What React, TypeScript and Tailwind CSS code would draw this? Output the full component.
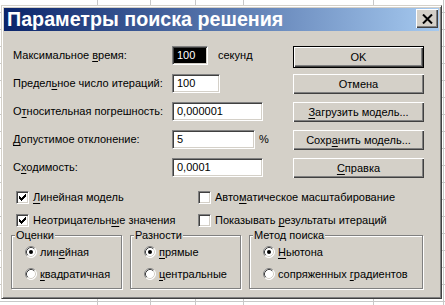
import React from "react";

function Acc({ t }: { t: string }) {
  const i = t.indexOf("&");
  if (i < 0) return <>{t}</>;
  return (
    <>
      {t.slice(0, i)}
      <span className="underline underline-offset-[2px]">{t[i + 1]}</span>
      {t.slice(i + 2)}
    </>
  );
}

const sunken =
  "border border-t-[#808080] border-l-[#808080] border-r-white border-b-white shadow-[inset_1px_1px_0_#404040,inset_-1px_-1px_0_#d4d0c8]";

function Field({ w, value, selected }: { w: string; value: string; selected?: boolean }) {
  return (
    <div
      className={`h-[19px] ${w} ${sunken} flex items-center pl-[4px] ${
        selected ? "bg-black text-white" : "bg-white text-black"
      }`}
    >
      {value}
    </div>
  );
}

function Btn({ t, def }: { t: string; def?: boolean }) {
  return (
    <button
      type="button"
      className={
        def
          ? "h-[22px] w-full border border-black bg-[#d4d0c8] shadow-[inset_1px_1px_0_#fff,inset_-1px_-1px_0_#404040,inset_-2px_-2px_0_#808080] flex items-center justify-center"
          : "h-[20px] w-full bg-[#d4d0c8] shadow-[inset_1px_1px_0_#fff,inset_-1px_-1px_0_#404040,inset_-2px_-2px_0_#808080] flex items-center justify-center"
      }
    >
      <Acc t={t} />
    </button>
  );
}

const CHECK = ["......X", ".....XX", "X...XXX", "XX.XXX.", "XXXXX..", ".XXX...", "..X...."];

function Check({ checked, t }: { checked?: boolean; t: string }) {
  return (
    <div className="flex items-center gap-[4px] h-[13px]">
      <div className={`w-[13px] h-[13px] shrink-0 bg-white ${sunken} flex items-center justify-center`}>
        {checked && (
          <svg width="7" height="7" viewBox="0 0 7 7" shapeRendering="crispEdges">
            {CHECK.flatMap((row, y) =>
              row.split("").map((c, x) =>
                c === "X" ? <rect key={`${x}-${y}`} x={x} y={y} width="1" height="1" fill="#000" /> : null
              )
            )}
          </svg>
        )}
      </div>
      <span className="whitespace-nowrap">
        <Acc t={t} />
      </span>
    </div>
  );
}

function Radio({ on, t }: { on?: boolean; t: string }) {
  return (
    <div className="flex items-center gap-[3px] h-[12px]">
      <svg width="12" height="12" viewBox="0 0 12 12" className="shrink-0">
        <circle cx="6" cy="6" r="5.5" fill="#fff" />
        <path d="M2.11 9.89 A5.5 5.5 0 0 1 9.89 2.11" stroke="#808080" fill="none" strokeWidth="1" />
        <path d="M9.89 2.11 A5.5 5.5 0 0 1 2.11 9.89" stroke="#ffffff" fill="none" strokeWidth="1" />
        <path d="M2.82 9.18 A4.5 4.5 0 0 1 9.18 2.82" stroke="#404040" fill="none" strokeWidth="1" />
        <path d="M9.18 2.82 A4.5 4.5 0 0 1 2.82 9.18" stroke="#d4d0c8" fill="none" strokeWidth="1" />
        {on && <circle cx="6" cy="6" r="2" fill="#000" />}
      </svg>
      <span className="whitespace-nowrap">
        <Acc t={t} />
      </span>
    </div>
  );
}

function Group({ title, w, children }: { title: string; w: string; children: React.ReactNode }) {
  return (
    <div
      className={`relative ${w} h-[54px] border border-[#808080] shadow-[1px_1px_0_#fff,inset_1px_1px_0_#fff] pl-[13px] pt-[10px] flex flex-col gap-[10px]`}
    >
      <span className="absolute left-[3px] top-[-7px] bg-[#d4d0c8] px-[1px] leading-[12px]">{title}</span>
      {children}
    </div>
  );
}

export default function App() {
  return (
    <div className="w-[445px] h-[305px] overflow-hidden bg-white [background-image:linear-gradient(to_right,transparent_97px,#c8c8c8_97px,#c8c8c8_98px,transparent_98px,transparent_150px,#c8c8c8_150px,#c8c8c8_151px,transparent_151px,transparent_195px,#c8c8c8_195px,#c8c8c8_196px,transparent_196px,transparent_243px,#c8c8c8_243px,#c8c8c8_244px,transparent_244px,transparent_373px,#c8c8c8_373px,#c8c8c8_374px,transparent_374px,transparent_443px,#c8c8c8_443px,#c8c8c8_444px,transparent_444px),repeating-linear-gradient(to_bottom,transparent_0px,transparent_12px,#c8c8c8_12px,#c8c8c8_13px,transparent_13px,transparent_17px)] pt-[5px] pl-[1px] font-['Liberation_Sans',Arial,sans-serif] text-[11px] leading-none text-black">
      <div className="w-[441px] h-[294px] bg-[#d4d0c8] border border-t-[#d4d0c8] border-l-[#d4d0c8] border-r-[#404040] border-b-[#404040] shadow-[inset_1px_1px_0_#fff,inset_-1px_-1px_0_#808080] p-[2px] flex flex-col">
        {/* Title bar */}
        <div className="h-[23px] shrink-0 bg-[linear-gradient(to_right,#0a246a,#a6caf0)] flex items-center justify-between pl-[3px] pr-[1px]">
          <span className="text-white font-bold text-[19.7px] leading-[19px] whitespace-nowrap">
            Параметры поиска решения
          </span>
          <button
            type="button"
            className="w-[22px] h-[19px] mb-[2px] bg-[#d4d0c8] shadow-[inset_1px_1px_0_#fff,inset_-1px_-1px_0_#404040,inset_-2px_-2px_0_#808080] flex items-center justify-center"
          >
            <svg width="11" height="10" viewBox="0 0 11 10">
              <path d="M1 0.5 L10 9.5 M10 0.5 L1 9.5" stroke="#000" strokeWidth="2" fill="none" />
            </svg>
          </button>
        </div>

        {/* Body */}
        <div className="flex-1 flex flex-col pl-[7px] pt-[15px]">
          <div className="flex ml-[2px]">
            <div className="w-[280px] flex flex-col gap-[9px]">
              <div className="flex items-center h-[19px]">
                <span className="w-[159px]">
                  <Acc t="Максимальное &время:" />
                </span>
                <Field w="w-[36px]" value="100" selected />
                <span className="ml-[10px]">секунд</span>
              </div>
              <div className="flex items-center h-[19px]">
                <span className="w-[159px]">
                  <Acc t="Предел&ьное число итераций:" />
                </span>
                <Field w="w-[48px]" value="100" />
              </div>
              <div className="flex items-center h-[19px]">
                <span className="w-[159px]">
                  <Acc t="О&тносительная погрешность:" />
                </span>
                <Field w="w-[91px]" value="0,000001" />
              </div>
              <div className="flex items-center h-[19px]">
                <span className="w-[159px]">
                  <Acc t="&Допустимое отклонение:" />
                </span>
                <Field w="w-[83px]" value="5" />
                <span className="ml-[4px]">%</span>
              </div>
              <div className="flex items-center h-[19px]">
                <span className="w-[159px]">
                  <Acc t="С&ходимость:" />
                </span>
                <Field w="w-[91px]" value="0,0001" />
              </div>
            </div>
            <div className="w-[131px] flex flex-col">
              <Btn t="OK" def />
              <div className="mt-[6px]">
                <Btn t="Отмена" />
              </div>
              <div className="mt-[8px]">
                <Btn t="&Загрузить модель..." />
              </div>
              <div className="mt-[8px]">
                <Btn t="Сохр&анить модель..." />
              </div>
              <div className="mt-[8px]">
                <Btn t="&Справка" />
              </div>
            </div>
          </div>

          <div className="mt-[13px] ml-[5px] flex">
            <div className="w-[182px] flex flex-col gap-[10px]">
              <Check checked t="&Линейная модель" />
              <Check checked t="Неотрицательн&ые значения" />
            </div>
            <div className="flex flex-col gap-[10px]">
              <Check t="Авто&матическое масштабирование" />
              <Check t="Показывать &результаты итераций" />
            </div>
          </div>

          <div className="mt-[8px] flex gap-[8px]">
            <Group title="Оценки" w="w-[111px]">
              <Radio on t="лин&ейная" />
              <Radio t="&квадратичная" />
            </Group>
            <Group title="Разности" w="w-[111px]">
              <Radio on t="&прямые" />
              <Radio t="&центральные" />
            </Group>
            <Group title="Метод поиска" w="w-[174px]">
              <Radio on t="&Ньютона" />
              <Radio t="сопряженных &градиентов" />
            </Group>
          </div>
        </div>
      </div>
    </div>
  );
}
